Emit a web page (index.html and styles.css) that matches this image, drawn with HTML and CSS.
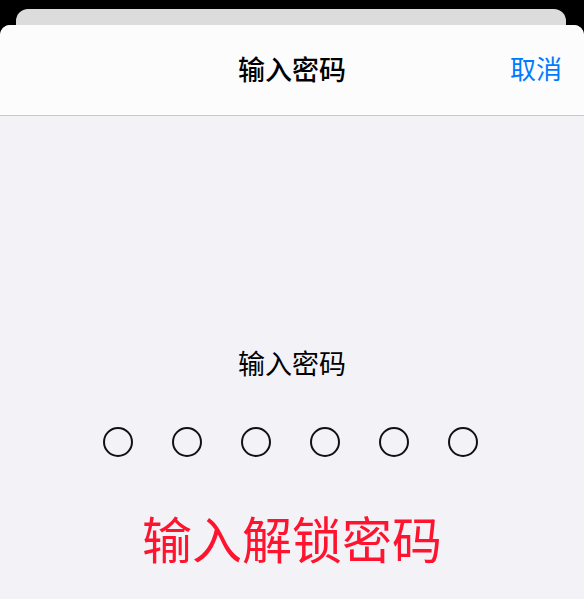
FILE: index.html
```html
<!DOCTYPE html>
<html lang="zh-CN">
<head>
<meta charset="utf-8">
<title>输入密码</title>
<link rel="stylesheet" href="styles.css">
</head>
<body>
<div class="screen">
  <div class="back-sheet"></div>
  <div class="sheet">
    <header class="nav">
      <div class="nav-title">输入密码</div>
      <div class="nav-cancel">取消</div>
    </header>
    <main class="content">
      <div class="prompt">输入密码</div>
      <div class="dots">
        <span class="dot"></span>
        <span class="dot"></span>
        <span class="dot"></span>
        <span class="dot"></span>
        <span class="dot"></span>
        <span class="dot"></span>
      </div>
      <div class="hint">输入解锁密码</div>
    </main>
  </div>
</div>
</body>
</html>
```

FILE: styles.css
```css
html, body {
  margin: 0;
  padding: 0;
  background: #000;
}
.screen {
  width: 584px;
  height: 599px;
  overflow: hidden;
  padding-top: 9px;
  box-sizing: border-box;
  display: flex;
  flex-direction: column;
  font-family: "Noto Sans CJK SC", "Noto Sans", sans-serif;
}
.back-sheet {
  margin: 0 18px 0 16px;
  height: 16px;
  background: #dcdcdc;
  border-radius: 12px 12px 0 0;
}
.sheet {
  flex: 1;
  background: #f2f2f7;
  border-radius: 10px 10px 0 0;
  overflow: hidden;
  display: flex;
  flex-direction: column;
}
.nav {
  height: 90px;
  background: #fcfcfc;
  border-bottom: 1px solid #c8c7cc;
  position: relative;
  display: flex;
  align-items: center;
  justify-content: center;
}
.nav-title {
  font-size: 27px;
  font-weight: 500;
  color: #000;
  line-height: 36px;
  margin-top: -2px;
}
.nav-cancel {
  position: absolute;
  right: 22px;
  top: 25px;
  font-size: 26px;
  line-height: 36px;
  color: #007aff;
}
.content {
  flex: 1;
  display: flex;
  flex-direction: column;
  align-items: center;
  padding-top: 229px;
}
.prompt {
  font-size: 27px;
  line-height: 36px;
  color: #000;
}
.dots {
  display: flex;
  gap: 39px;
  margin-top: 46px;
  margin-left: -3px;
}
.dot {
  width: 30px;
  height: 30px;
  box-sizing: border-box;
  border: 2px solid #111;
  border-radius: 50%;
}
.hint {
  margin-top: 50px;
  font-size: 50px;
  line-height: 60px;
  color: #ff1430;
}
```
